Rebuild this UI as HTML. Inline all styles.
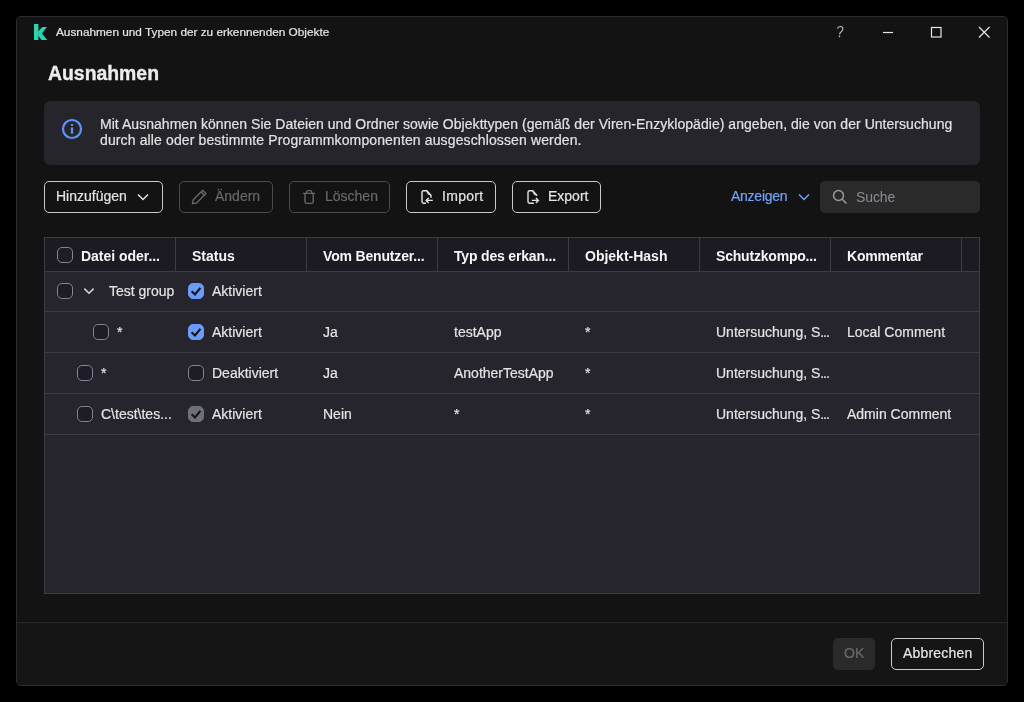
<!DOCTYPE html>
<html><head><meta charset="utf-8">
<style>
*{box-sizing:border-box;margin:0;padding:0}
html,body{width:1024px;height:702px;background:#000;overflow:hidden;font-family:"Liberation Sans",sans-serif;position:relative;-webkit-font-smoothing:antialiased}
#win{position:absolute;left:16px;top:16px;width:992px;height:670px;background:#131313;border:1px solid #2c2c30;border-radius:5px;overflow:hidden}
.t{position:absolute;white-space:nowrap;line-height:16px;font-size:14px;color:#e4e4e4;will-change:transform;-webkit-text-stroke:0.2px currentColor}
.btn{position:absolute;top:181px;height:32px;border:1px solid #c9c9c9;border-radius:5px}
.btn.dis{border-color:#4b4b4b}
svg{position:absolute;overflow:visible}
.cb{position:absolute;width:16px;height:16px;border:1.8px solid #82858f;border-radius:5px;background:#1e1c26}
.cb.on{background:#6a9bf8;border-color:#6a9bf8}
.cb.gr{background:#6d6f79;border-color:#6d6f79}
.el{letter-spacing:-1.1px}
.hl{position:absolute;left:44px;width:936px;height:1px;background:#3d3c43}
.vl{position:absolute;top:238px;width:1px;height:33px;background:#3d3c43}
.hd{position:absolute;top:248px;will-change:transform;font-weight:bold;font-size:14px;color:#f6f6f6;white-space:nowrap;line-height:16px}
</style></head><body>
<div id="win"></div>

<!-- title bar -->
<svg style="left:0;top:0" width="1024" height="60">
  <g fill="#2ad6ad">
    <rect x="34" y="24" width="4.4" height="16"/>
    <polygon points="38.2,31.6 42.3,27 46.9,27 41.9,33.5 47.3,40 41.6,40 38.2,35.8"/>
  </g>
</svg>
<div class="t" style="left:56px;top:24px;font-size:11.8px;color:#e6e6e6">Ausnahmen und Typen der zu erkennenden Objekte</div>
<svg style="left:0;top:0" width="1024" height="60" fill="none" stroke="#c4c4c4" stroke-width="1.05"><path d="M837.4,28.6 C837.8,26.9 839,26.4 840.2,26.4 C841.8,26.4 842.9,27.4 842.9,28.9 C842.9,30.6 841.4,31.3 840.5,32.4 C839.9,33.2 839.6,33.8 839.6,34.6"/><circle cx="839.5" cy="36.4" r="0.8" fill="#c4c4c4" stroke="none"/></svg>
<svg style="left:0;top:0" width="1024" height="60" fill="none" stroke="#e6e6e6" stroke-width="1.2">
  <line x1="883" y1="32.5" x2="893" y2="32.5"/>
  <rect x="931.5" y="27.5" width="9.5" height="9.5"/>
  <line x1="979" y1="27" x2="989.5" y2="37.5"/>
  <line x1="989.5" y1="27" x2="979" y2="37.5"/>
</svg>

<!-- header -->
<div class="t" style="left:48px;top:62px;font-size:19.4px;line-height:22px;font-weight:bold;color:#ececec;-webkit-text-stroke:0.35px #ececec">Ausnahmen</div>

<!-- info box -->
<div style="position:absolute;left:44px;top:101px;width:936px;height:64px;background:#26252b;border-radius:6px"></div>
<svg style="left:0;top:0" width="1024" height="200">
  <circle cx="72" cy="129" r="9" fill="none" stroke="#5e93f6" stroke-width="2.2"/>
  <rect x="70.9" y="127.4" width="2.2" height="6.4" fill="#5e93f6"/>
  <rect x="70.9" y="124" width="2.2" height="1.9" fill="#5e93f6"/>
</svg>
<div class="t" style="left:100px;top:116px;color:#e2e2e2;letter-spacing:0.04px">Mit Ausnahmen können Sie Dateien und Ordner sowie Objekttypen (gemäß der Viren-Enzyklopädie) angeben, die von der Untersuchung</div>
<div class="t" style="left:100px;top:132px;color:#e2e2e2;letter-spacing:0.125px">durch alle oder bestimmte Programmkomponenten ausgeschlossen werden.</div>

<!-- toolbar -->
<div class="btn" style="left:44px;width:119px"></div>
<div class="t" style="left:56px;top:188px">Hinzufügen</div>
<svg style="left:0;top:0" width="1024" height="240" fill="none" stroke="#e4e4e4" stroke-width="1.5">
  <polyline points="138,194.5 143,199.5 148,194.5"/>
</svg>

<div class="btn dis" style="left:179px;width:94px"></div>
<svg style="left:0;top:0" width="1024" height="240" fill="none" stroke="#676767" stroke-width="1.4">
  <path d="M192.4,203.6 L193.3,199.7 L202.7,190.3 L206,193.6 L196.6,203 Z M201.1,191.9 L204.4,195.2" stroke-linejoin="round"/>
</svg>
<div class="t" style="left:215px;top:188px;color:#686868">Ändern</div>

<div class="btn dis" style="left:289px;width:101px"></div>
<svg style="left:0;top:0" width="1024" height="240" fill="none" stroke="#676767" stroke-width="1.4">
  <path d="M303,193.4 H315 M306.6,193.4 V192.2 Q306.6,190.6 308.2,190.6 H310.2 Q311.8,190.6 311.8,192.2 V193.4 M305,193.4 V201.8 Q305,203.4 306.6,203.4 H311.6 Q313.2,203.4 313.2,201.8 V193.4"/>
</svg>
<div class="t" style="left:325px;top:188px;color:#686868">Löschen</div>

<div class="btn" style="left:406px;width:90px"></div>
<svg style="left:0;top:0" width="1024" height="240" fill="none" stroke="#e4e4e4" stroke-width="1.4">
  <path d="M426,203.2 H423.6 Q422,203.2 422,201.6 V192.4 Q422,190.8 423.6,190.8 H426.8 L431,195.2 V197.8"/>
  <path d="M427,191 Q427.4,194.6 430.8,195" stroke-width="1.1"/>
  <path d="M432.8,200.4 H426.2 M428.7,197.9 L426.2,200.4 L428.7,202.9"/>
</svg>
<div class="t" style="left:442px;top:188px;letter-spacing:0.3px">Import</div>

<div class="btn" style="left:512px;width:89px"></div>
<svg style="left:0;top:0" width="1024" height="240" fill="none" stroke="#e4e4e4" stroke-width="1.4">
  <path d="M533.8,203.2 H529.6 Q528,203.2 528,201.6 V192.4 Q528,190.8 529.6,190.8 H532.8 L537.2,195.6"/>
  <path d="M533,191 Q533.4,194.6 536.8,195.2" stroke-width="1.1"/>
  <path d="M531.8,200.4 H538.4 M535.9,197.9 L538.4,200.4 L535.9,202.9"/>
</svg>
<div class="t" style="left:548px;top:188px">Export</div>

<div class="t" style="left:731px;top:188px;color:#74a2f6;letter-spacing:-0.25px">Anzeigen</div>
<svg style="left:0;top:0" width="1024" height="240" fill="none" stroke="#74a2f6" stroke-width="1.5">
  <polyline points="799,194.5 804,199.5 809,194.5"/>
</svg>
<div style="position:absolute;left:820px;top:181px;width:160px;height:32px;background:#2a2a2a;border-radius:5px"></div>
<svg style="left:0;top:0" width="1024" height="240" fill="none" stroke="#9a9a9a" stroke-width="1.5">
  <circle cx="838.5" cy="195.5" r="5"/>
  <line x1="842" y1="199" x2="846.5" y2="203.5"/>
</svg>
<div class="t" style="left:856px;top:189px;color:#8a8c96;-webkit-text-stroke:0;letter-spacing:-0.1px">Suche</div>

<!-- table -->
<div style="position:absolute;left:44px;top:237px;width:936px;height:357px;background:#26242c;border:1px solid #3d3c43"></div>
<div style="position:absolute;left:45px;top:238px;width:934px;height:33px;background:#1c1b23"></div>
<div class="hl" style="top:271px"></div>
<div class="hl" style="top:311px"></div>
<div class="hl" style="top:352px"></div>
<div class="hl" style="top:393px"></div>
<div class="hl" style="top:434px"></div>
<div class="vl" style="left:175px"></div>
<div class="vl" style="left:306px"></div>
<div class="vl" style="left:437px"></div>
<div class="vl" style="left:568px"></div>
<div class="vl" style="left:699px"></div>
<div class="vl" style="left:830px"></div>
<div class="vl" style="left:961px"></div>

<div class="cb" style="left:57px;top:247px"></div>
<div class="hd" style="left:81px;letter-spacing:-0.03px">Datei oder...</div>
<div class="hd" style="left:192px">Status</div>
<div class="hd" style="left:323px;letter-spacing:-0.17px">Vom Benutzer...</div>
<div class="hd" style="left:454px;letter-spacing:-0.18px">Typ des erkan...</div>
<div class="hd" style="left:585px">Objekt-Hash</div>
<div class="hd" style="left:716px;letter-spacing:-0.2px">Schutzkompo...</div>
<div class="hd" style="left:847px;letter-spacing:-0.22px">Kommentar</div>

<!-- row 1 -->
<div class="cb" style="left:57px;top:283px"></div>
<svg style="left:0;top:0" width="1024" height="702" fill="none" stroke="#d8d8d8" stroke-width="1.5">
  <polyline points="84.4,288.6 89,293.2 93.6,288.6"/>
</svg>
<div class="t" style="left:109px;top:283px">Test group</div>
<div class="cb on" style="left:188px;top:283px"></div>
<div class="t" style="left:212px;top:283px">Aktiviert</div>

<!-- row 2 -->
<div class="cb" style="left:93px;top:324px"></div>
<div class="t" style="left:117px;top:324px">*</div>
<div class="cb on" style="left:188px;top:324px"></div>
<div class="t" style="left:212px;top:324px">Aktiviert</div>
<div class="t" style="left:323px;top:324px">Ja</div>
<div class="t" style="left:454px;top:324px">testApp</div>
<div class="t" style="left:585px;top:324px">*</div>
<div class="t" style="left:716px;top:324px">Untersuchung, S<span class="el">...</span></div>
<div class="t" style="left:847px;top:324px">Local Comment</div>

<!-- row 3 -->
<div class="cb" style="left:77px;top:365px"></div>
<div class="t" style="left:101px;top:365px">*</div>
<div class="cb" style="left:188px;top:365px"></div>
<div class="t" style="left:212px;top:365px">Deaktiviert</div>
<div class="t" style="left:323px;top:365px">Ja</div>
<div class="t" style="left:454px;top:365px">AnotherTestApp</div>
<div class="t" style="left:585px;top:365px">*</div>
<div class="t" style="left:716px;top:365px">Untersuchung, S<span class="el">...</span></div>

<!-- row 4 -->
<div class="cb" style="left:77px;top:406px"></div>
<div class="t" style="left:101px;top:406px">C\test\tes...</div>
<div class="cb gr" style="left:188px;top:406px"></div>
<div class="t" style="left:212px;top:406px">Aktiviert</div>
<div class="t" style="left:323px;top:406px">Nein</div>
<div class="t" style="left:454px;top:406px">*</div>
<div class="t" style="left:585px;top:406px">*</div>
<div class="t" style="left:716px;top:406px">Untersuchung, S<span class="el">...</span></div>
<div class="t" style="left:847px;top:406px">Admin Comment</div>

<svg style="left:0;top:0" width="1024" height="702" fill="none" stroke="#121212" stroke-width="2.1">
  <polyline points="191.6,291.2 195,294.4 200.4,287.8"/>
  <polyline points="191.6,332.2 195,335.4 200.4,328.8"/>
</svg>
<svg style="left:0;top:0" width="1024" height="702" fill="none" stroke="#141414" stroke-width="2.1">
  <polyline points="191.6,414.2 195,417.4 200.4,410.8"/>
</svg>

<!-- footer -->
<div style="position:absolute;left:17px;top:621px;width:990px;height:1px;background:#0f0f0f"></div>
<div style="position:absolute;left:17px;top:622px;width:990px;height:1px;background:#29282e"></div>
<div style="position:absolute;left:17px;top:623px;width:990px;height:62px;background:#151515;border-radius:0 0 4px 4px"></div>
<div style="position:absolute;left:833px;top:638px;width:42px;height:32px;background:#2a2a2a;border-radius:5px"></div>
<div class="t" style="left:844px;top:645px;color:#6a6a6a">OK</div>
<div style="position:absolute;left:891px;top:638px;width:93px;height:32px;border:1px solid #c9c9c9;border-radius:5px"></div>
<div class="t" style="left:903px;top:645px;color:#e6e6e6;letter-spacing:0.2px">Abbrechen</div>
</body></html>
